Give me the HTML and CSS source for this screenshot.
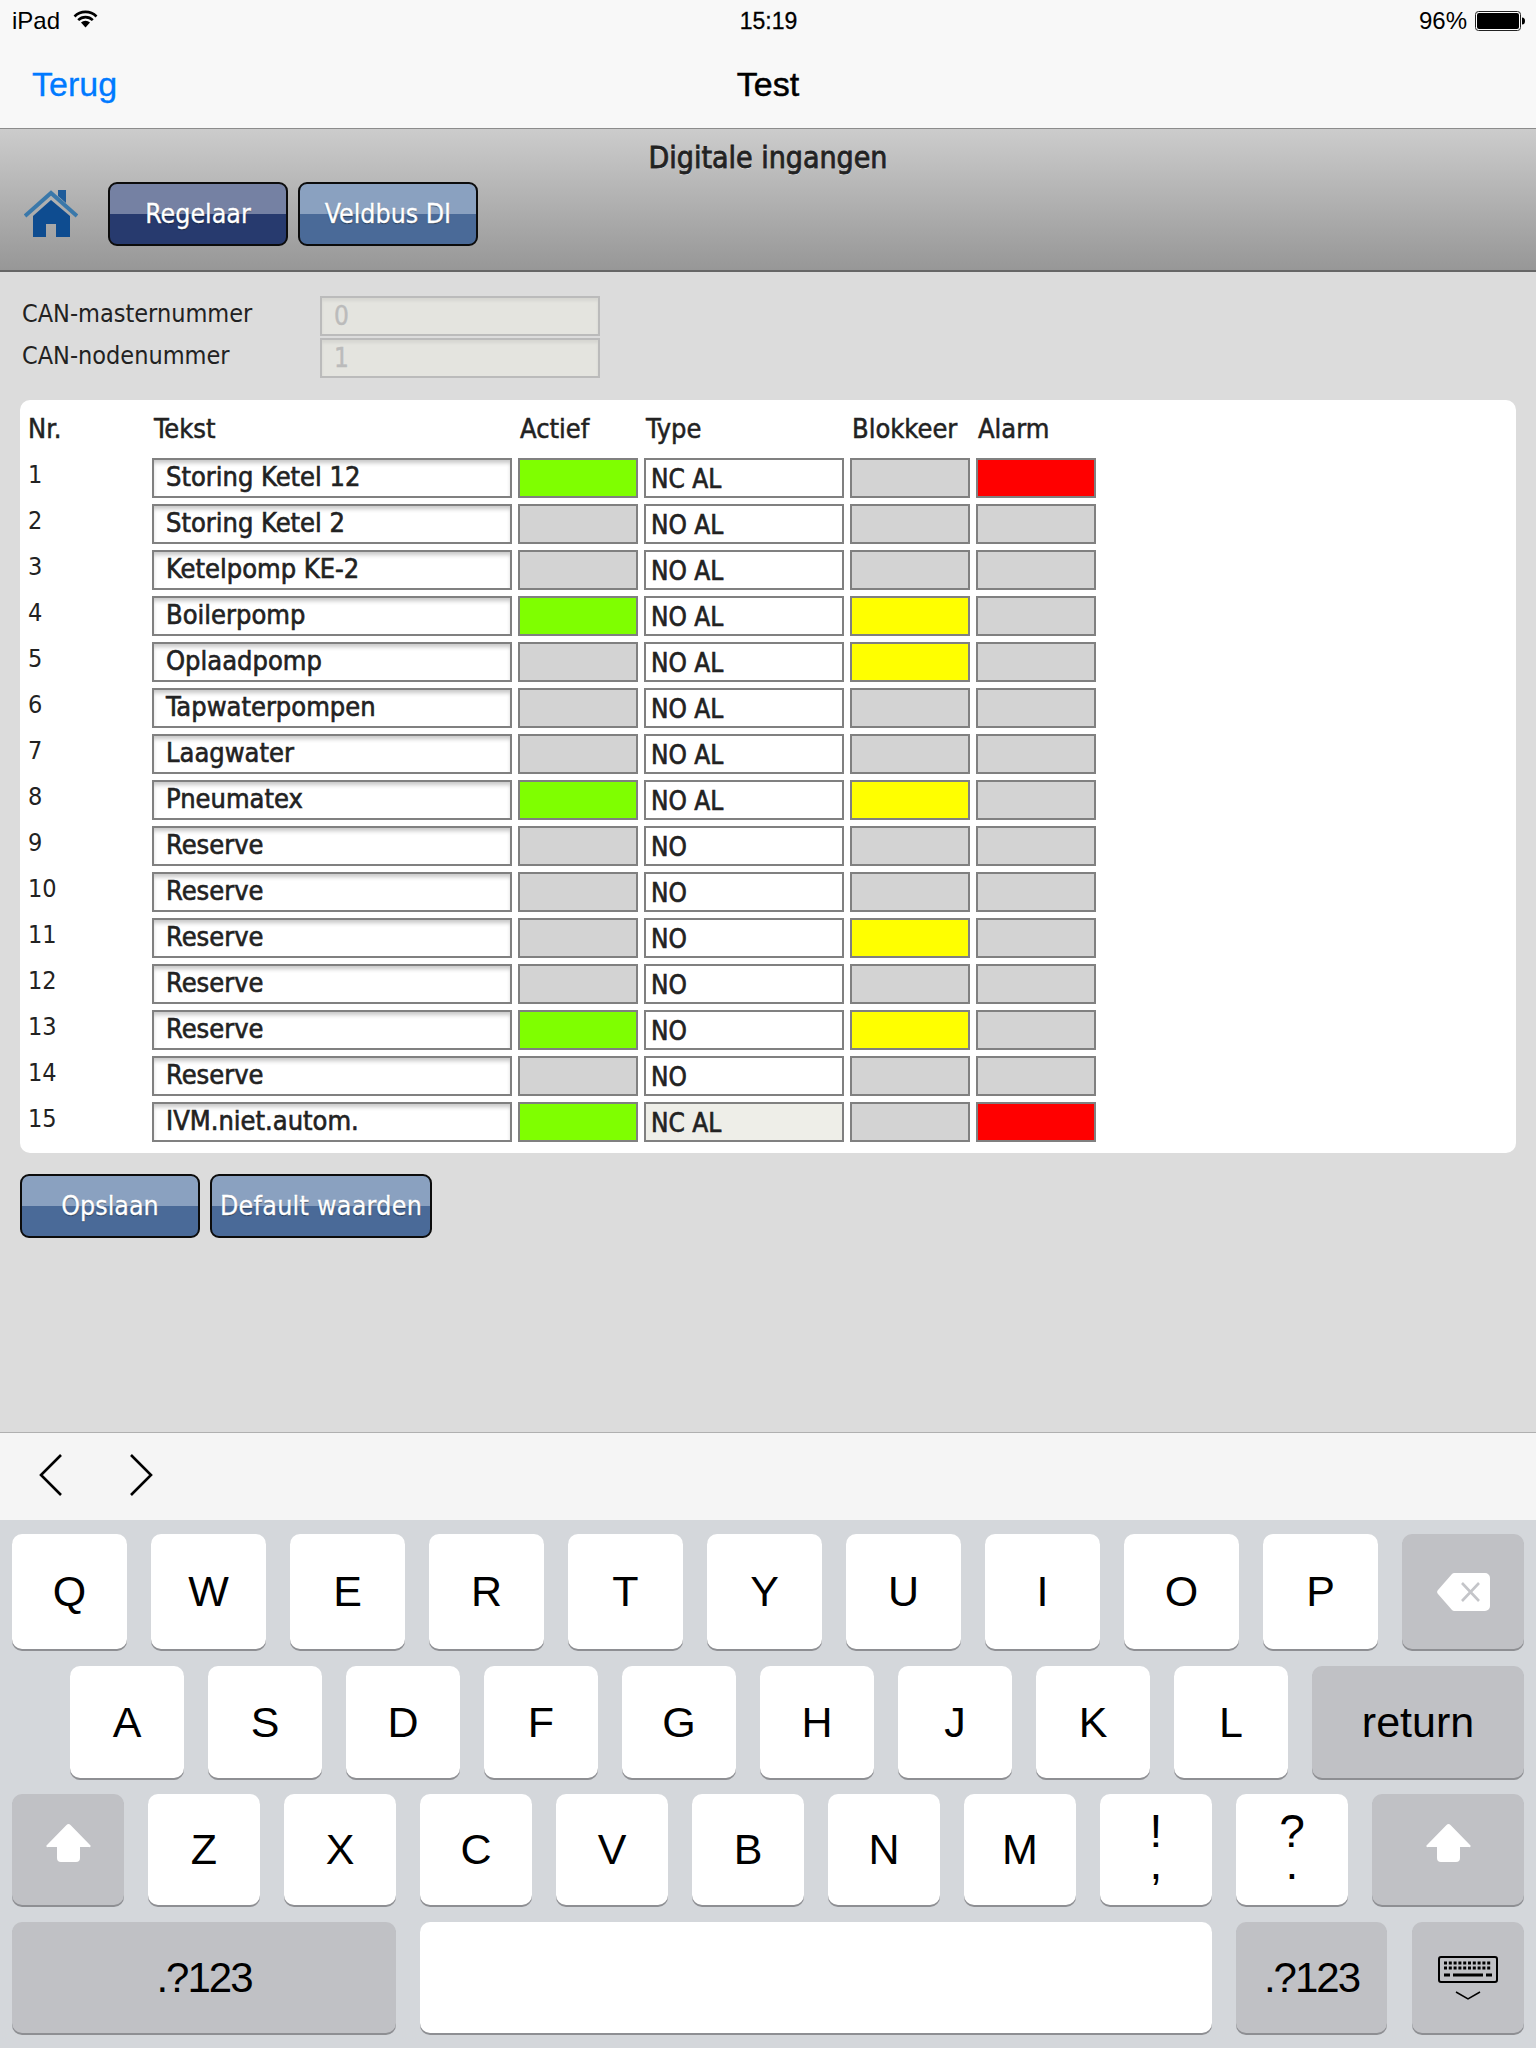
FILE: index.html
```html
<!DOCTYPE html>
<html>
<head>
<meta charset="UTF-8">
<title>Digitale ingangen</title>
<link rel="stylesheet" href="styles.css">
</head>

<body>

<!-- IOS BARS -->
<div class="topbar">
  <div class="statusbar">
    <div class="st-left">
      <span>iPad</span>
      <svg class="wifi" width="25" height="18" viewBox="0 0 25 18">
        <path d="M1.5 6.5a15.5 15.5 0 0 1 22 0M5.2 10.2a10.3 10.3 0 0 1 14.6 0" fill="none" stroke="#000" stroke-width="2.6"/>
        <path d="M8 12.6a6.4 6.4 0 0 1 9 0L12.5 17.5z" fill="#000"/>
      </svg>
    </div>
    <div class="st-time">15:19</div>
    <div class="st-right">
      <span>96%</span>
      <svg width="50" height="20" viewBox="0 0 50 20">
        <rect x=".5" y=".5" width="45" height="19" rx="3" fill="#fff" stroke="#222"/>
        <rect x="2" y="2" width="42" height="16" rx="2" fill="#000"/>
        <path d="M47 6.5a3 3.5 0 0 1 0 7z" fill="#000"/>
      </svg>
    </div>
  </div>
  <div class="navbar">
    <div class="nav-back">Terug</div>
    <div class="nav-title">Test</div>
    <div></div>
  </div>
</div>

<!-- HEADER -->
<div class="subhead">
  <div class="subtitle">Digitale ingangen</div>
  <div class="toolbar">
    <svg class="home" width="54" height="48" viewBox="0 0 54 48">
      <path d="M34 0h8v13l-8-7z" fill="#1f5c9a"/>
      <path d="M1 26 27 3l26 23" fill="none" stroke="#3a78aa" stroke-width="4"/>
      <path d="M9 26 27 10l19 16v21H32V34H22v13H9z" fill="#0e4c90"/>
    </svg>
    <div class="btn btn-dark">Regelaar</div>
    <div class="btn btn-veld">Veldbus DI</div>
  </div>
</div>

<!-- CONTENT -->
<div class="content">
  <div class="canrow"><span>CAN-masternummer</span><div class="caninput">0</div></div>
  <div class="canrow"><span>CAN-nodenummer</span><div class="caninput">1</div></div>

  <div class="panel">
    <div class="head">Nr.</div><div class="head">Tekst</div><div class="head">Actief</div><div class="head">Type</div><div class="head">Blokkeer</div><div class="head">Alarm</div>

    <div class="nr">1</div><div class="txt">Storing Ketel 12</div><div class="cell green"></div><div class="type">NC AL</div><div class="cell"></div><div class="cell red"></div>
    <div class="nr">2</div><div class="txt">Storing Ketel 2</div><div class="cell"></div><div class="type">NO AL</div><div class="cell"></div><div class="cell"></div>
    <div class="nr">3</div><div class="txt">Ketelpomp KE-2</div><div class="cell"></div><div class="type">NO AL</div><div class="cell"></div><div class="cell"></div>
    <div class="nr">4</div><div class="txt">Boilerpomp</div><div class="cell green"></div><div class="type">NO AL</div><div class="cell yellow"></div><div class="cell"></div>
    <div class="nr">5</div><div class="txt">Oplaadpomp</div><div class="cell"></div><div class="type">NO AL</div><div class="cell yellow"></div><div class="cell"></div>
    <div class="nr">6</div><div class="txt">Tapwaterpompen</div><div class="cell"></div><div class="type">NO AL</div><div class="cell"></div><div class="cell"></div>
    <div class="nr">7</div><div class="txt">Laagwater</div><div class="cell"></div><div class="type">NO AL</div><div class="cell"></div><div class="cell"></div>
    <div class="nr">8</div><div class="txt">Pneumatex</div><div class="cell green"></div><div class="type">NO AL</div><div class="cell yellow"></div><div class="cell"></div>
    <div class="nr">9</div><div class="txt">Reserve</div><div class="cell"></div><div class="type">NO</div><div class="cell"></div><div class="cell"></div>
    <div class="nr">10</div><div class="txt">Reserve</div><div class="cell"></div><div class="type">NO</div><div class="cell"></div><div class="cell"></div>
    <div class="nr">11</div><div class="txt">Reserve</div><div class="cell"></div><div class="type">NO</div><div class="cell yellow"></div><div class="cell"></div>
    <div class="nr">12</div><div class="txt">Reserve</div><div class="cell"></div><div class="type">NO</div><div class="cell"></div><div class="cell"></div>
    <div class="nr">13</div><div class="txt">Reserve</div><div class="cell green"></div><div class="type">NO</div><div class="cell yellow"></div><div class="cell"></div>
    <div class="nr">14</div><div class="txt">Reserve</div><div class="cell"></div><div class="type">NO</div><div class="cell"></div><div class="cell"></div>
    <div class="nr">15</div><div class="txt">IVM.niet.autom.</div><div class="cell green"></div><div class="type disabled">NC AL</div><div class="cell"></div><div class="cell red"></div>
  </div>

  <div class="actions">
    <div class="btn btn-veld">Opslaan</div>
    <div class="btn btn-veld btn-wide">Default waarden</div>
  </div>
</div>

<!-- ACCESSORY BAR -->
<div class="accessory">
  <svg width="24" height="42" viewBox="0 0 24 42"><path d="M22 1 2 21l20 20" fill="none" stroke="#000" stroke-width="2.6"/></svg>
  <svg width="24" height="42" viewBox="0 0 24 42"><path d="m2 1 20 20L2 41" fill="none" stroke="#000" stroke-width="2.6"/></svg>
</div>

<!-- KEYBOARD -->
<div class="keyboard">
  <div class="kbrow row1">
    <div class="key">Q</div><div class="key">W</div><div class="key">E</div><div class="key">R</div><div class="key">T</div><div class="key">Y</div><div class="key">U</div><div class="key">I</div><div class="key">O</div><div class="key">P</div>
    <div class="key fn backspace">
      <svg width="53" height="38" viewBox="0 0 53 38">
        <path d="M18 0h30a5 5 0 0 1 5 5v28a5 5 0 0 1-5 5H18a4 4 0 0 1-3-1L1 21a3 3 0 0 1 0-4L15 1a4 4 0 0 1 3-1z" fill="#fff"/>
        <path d="m25 10 17 18M42 10 25 28" stroke="#c4c5c9" stroke-width="2.6"/>
      </svg>
    </div>
  </div>
  <div class="kbrow row2">
    <div class="key">A</div><div class="key">S</div><div class="key">D</div><div class="key">F</div><div class="key">G</div><div class="key">H</div><div class="key">J</div><div class="key">K</div><div class="key">L</div>
    <div class="key fn return">return</div>
  </div>
  <div class="kbrow row3">
    <div class="key fn shift-l">
      <svg class="shift" width="45" height="38" viewBox="0 0 45 38"><path d="M20.500 1a3 3 0 0 1 4 0L44 21a1 1 0 0 1-1 2H34v11a4 4 0 0 1-4 4H15a4 4 0 0 1-4-4V23H2a1 1 0 0 1-1-2z" fill="#fff"/></svg>
    </div>
    <div class="key">Z</div><div class="key">X</div><div class="key">C</div><div class="key">V</div><div class="key">B</div><div class="key">N</div><div class="key">M</div>
    <div class="key punct"><span>!</span><span>,</span></div><div class="key punct"><span>?</span><span>.</span></div>
    <div class="key fn shift-r">
      <svg class="shift" width="45" height="38" viewBox="0 0 45 38"><path d="M20.500 1a3 3 0 0 1 4 0L44 21a1 1 0 0 1-1 2H34v11a4 4 0 0 1-4 4H15a4 4 0 0 1-4-4V23H2a1 1 0 0 1-1-2z" fill="#fff"/></svg>
    </div>
  </div>
  <div class="kbrow row4">
    <div class="key fn num num-l">.?123</div>
    <div class="key space"></div>
    <div class="key fn num num-r">.?123</div>
    <div class="key fn hide">
      <svg width="60" height="44" viewBox="0 0 60 44">
        <rect x="1" y="1" width="58" height="25" rx="2" fill="none" stroke="#000" stroke-width="2"/>
        <path d="M6 7h48M6 12h48" stroke="#000" stroke-width="3" stroke-dasharray="3 1.800"/>
        <path d="M6 19h6M15 19h30M48 19h6" stroke="#000" stroke-width="3"/>
        <path d="m18 36 12 7 12-7" fill="none" stroke="#000" stroke-width="1.500"/>
      </svg>
    </div>
  </div>
</div>

</body>
</html>
```

FILE: styles.css
```css
*{box-sizing:border-box}
body{
  margin:0; height:2048px; display:flex; flex-direction:column;
  background:#dcdcdc; overflow:hidden;
  font-family:"DejaVu Sans Condensed","DejaVu Sans",sans-serif; color:#222;
}

/* ios bars */
.topbar{
  height:129px; background:#f8f8f8; border-bottom:1px solid #8c8c8c;
  font-family:"Liberation Sans",Arial,sans-serif; color:#000;
}
.statusbar{
  height:42px; padding:0 11px 0 12px;
  display:grid; grid-template-columns:1fr auto 1fr; align-items:center;
  font-size:23px;
}
.st-left{display:flex;align-items:center;gap:13px}
.st-left span{font-size:24px}
.wifi{margin-top:-4px}
.st-time{-webkit-text-stroke:.3px #000}
.st-right{display:flex;align-items:center;justify-content:flex-end;gap:8px}
.st-right span{font-size:24px}
.navbar{
  height:86px; padding:0 32px 2px;
  display:grid; grid-template-columns:1fr auto 1fr; align-items:center;
  font-size:34px;
}
.nav-back{color:#007aff;-webkit-text-stroke:.3px #007aff}
.nav-title{-webkit-text-stroke:.5px #000}

/* header */
.subhead{
  height:143px; padding-top:14px;
  background:linear-gradient(#cccccc,#979797);
  border-bottom:2px solid #666;
}
.subtitle{
  height:30px; line-height:30px; text-align:center;
  font-size:30px; color:#222; -webkit-text-stroke:.8px #222;
  text-shadow:0 1px 0 #eee;
}
.toolbar{display:flex;align-items:center;margin-top:9px;padding-left:24px;gap:10px}
.home{margin-right:20px;filter:blur(.6px)}

.btn{
  width:180px; height:64px; line-height:60px; text-align:center;
  border:2px solid #0c0c0c; border-radius:9px;
  color:#fff; font-size:26.500px; -webkit-text-stroke:.3px #fff;
  text-shadow:0 1px 1px rgba(0,0,0,.5);
}
.btn-dark{background:linear-gradient(#7581a3 0,#7581a3 50%,#273a6e 50%,#273a6e 100%)}
.btn-veld{background:linear-gradient(#8aa1c0 0,#8aa1c0 50%,#4a6a98 50%,#4a6a98 100%)}
.btn-wide{width:222px;letter-spacing:.3px}

/* content */
.content{flex:1;padding:24px 20px 0}
.canrow{display:flex;align-items:center;height:40px;margin-bottom:2px;padding-left:2px;font-size:25px}
.canrow span{width:298px;margin-top:-6px}
.caninput{
  width:280px; height:40px; line-height:36px; padding-left:12px; font-size:26px;
  border:2px solid #bbb; background:#e4e4df; color:#bbb;
  box-shadow:inset 0 3px 3px rgba(0,0,0,.06);
  -webkit-text-stroke:.4px #bbb;
}

.panel{
  margin-top:22px; padding:6px 8px 11px;
  background:#fff; border-radius:10px;
  display:grid; gap:6px;
  grid-template-columns:118px 360px 120px 200px 120px 120px;
  grid-template-rows:46px;
  grid-auto-rows:40px;
  font-size:27px;
}
.head{line-height:46px;padding-left:2px;-webkit-text-stroke:.5px #222}
.head:first-child{padding-left:0}
.nr{font-size:25px;line-height:34px}
.txt,.type,.cell{border:2px solid #808080}
.txt{
  padding-left:12px; line-height:34px; background:#fff; color:#222;
  box-shadow:inset 0 4px 4px -1px rgba(0,0,0,.22);
  -webkit-text-stroke:.6px #222;
}
.type{padding-left:5px;font-size:26px;line-height:39px;background:#fff;-webkit-text-stroke:.6px #222}
.type.disabled{background:#eeeee8}
.cell{background:#d3d3d3}
.green{background:#7fff00}
.yellow{background:#ffff00}
.red{background:#ff0000}

.actions{display:flex;gap:10px;margin-top:21px}

/* accessory bar */
.accessory{
  height:88px; background:#f5f5f5; border-top:1px solid #b0b0b0;
  display:flex; align-items:center; gap:66px; padding:0 0 4px 39px;
}

/* keyboard */
.keyboard{
  height:528px; padding:14px 12px 0;
  background:#d4d7db;
  font-family:"Liberation Sans",Arial,sans-serif; color:#000;
}
.kbrow{display:flex}
.key{
  display:flex; align-items:center; justify-content:center;
  background:#fff; border-radius:10px;
  box-shadow:0 2px 0 #8e8f93;
  font-size:43px;
}
.fn{background:#c0c1c5}
.row1{height:115px;gap:24px;margin-bottom:17px}
.row1 .key{width:115px}
.row1 .backspace{width:122px}
.row2{height:112px;gap:24px;margin-bottom:16px;padding-left:58px}
.row2 .key{width:114px}
.row2 .return{width:212px;font-size:43px}
.row3{height:111px;gap:24px;margin-bottom:17px}
.row3 .key{width:112px}
.row3 .shift-r{width:152px}
.shift{margin-top:-14px}
.punct{display:block;padding-top:21px;font-size:46px;text-align:center}
.punct span{display:block;height:32px;line-height:32px}
.row4{height:111px;gap:24px}
.row4 .num{font-size:42px;letter-spacing:-2px}
.row4 .num-l{width:384px}
.row4 .space{width:792px}
.row4 .num-r{width:151px}
.row4 .hide{width:112px;margin-left:1px}
```
